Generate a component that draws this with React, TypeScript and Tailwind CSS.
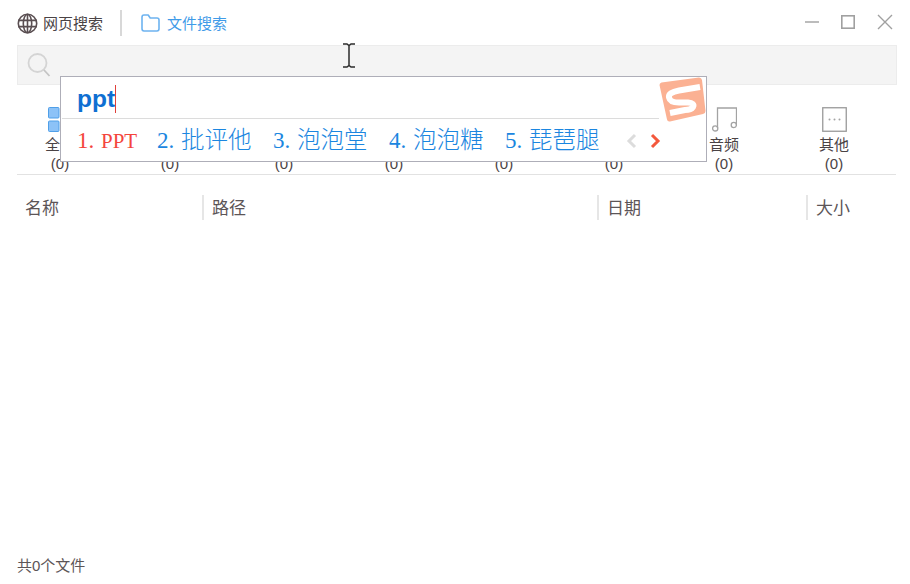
import React from "react";

const CJK = "font-['Liberation_Sans','Noto_Sans_CJK_SC',sans-serif]";

function Globe() {
  return (
    <svg width="21" height="21" viewBox="0 0 21 21" fill="none" stroke="#5a4f52" strokeWidth="1.6">
      <circle cx="10.5" cy="10.5" r="9.2" />
      <ellipse cx="10.5" cy="10.5" rx="4.2" ry="9.2" />
      <path d="M1.3 7.4h18.4M1.3 13.6h18.4M10.5 1.3v18.4" />
    </svg>
  );
}

function Folder() {
  return (
    <svg width="19" height="18" viewBox="0 0 19 18" fill="none" stroke="#6db3f0" strokeWidth="1.6">
      <path d="M1 3.2C1 2 1.8 1 3 1h4.2l2 3H16c1.2 0 2 .8 2 2v8.8c0 1.2-.8 2.2-2 2.2H3c-1.2 0-2-1-2-2.2z" strokeLinejoin="round" />
    </svg>
  );
}

function SearchIcon() {
  return (
    <svg width="24" height="26" viewBox="0 0 24 26" fill="none" stroke="#d4d4d4" strokeWidth="1.8">
      <circle cx="10.5" cy="11" r="9" />
      <path d="M17 18l5.5 6" stroke="#c4c4c4" />
    </svg>
  );
}

function Squares() {
  return (
    <svg width="25" height="25" viewBox="0 0 25 25" fill="#8cc2f7" stroke="#4f9fe8" strokeWidth="1">
      <rect x="0.5" y="0.5" width="10.5" height="10.5" rx="1" />
      <rect x="14" y="0.5" width="10.5" height="10.5" rx="1" />
      <rect x="0.5" y="14" width="10.5" height="10.5" rx="1" />
      <rect x="14" y="14" width="10.5" height="10.5" rx="1" />
    </svg>
  );
}

function Music() {
  return (
    <svg width="25" height="25" viewBox="0 0 25 25" fill="none" stroke="#a3a3a3" strokeWidth="1.3">
      <path d="M5.5 21V1h19v17" />
      <circle cx="3.2" cy="21.4" r="2.6" />
      <circle cx="21.8" cy="18" r="2.6" />
    </svg>
  );
}

function Dots() {
  return (
    <svg width="25" height="25" viewBox="0 0 25 25" fill="none">
      <rect x="0.75" y="0.75" width="23.5" height="23.5" stroke="#9a9a9a" strokeWidth="1.3" />
      <circle cx="7.5" cy="12.5" r="1" fill="#a3a3a3" />
      <circle cx="12.5" cy="12.5" r="1" fill="#a3a3a3" />
      <circle cx="17.5" cy="12.5" r="1" fill="#a3a3a3" />
    </svg>
  );
}

function SogouLogo() {
  return (
    <svg width="48" height="47" viewBox="0 0 48 47">
      <path d="M2.5 5.5 L40 0.5 Q42.5 0.5 43 3 L46.5 34 Q46.5 36.5 44 37 L11 44.5 Q8.5 45 8 42.5 L0.5 8 Q0.5 6 2.5 5.5Z" fill="#fbb193" />
      <path d="M41 10 L20 13.5 Q9 15.5 10 20.5 Q11 25.5 20 25.5 L29 25.5 Q36 26 34 30 Q32 33 26 33 L11 36" fill="none" stroke="#fff" strokeWidth="6" strokeLinejoin="round" />
    </svg>
  );
}

const blank = <div className="h-[25px]" />;

// Only the labels the popup leaves visible carry text.
const cats = [
  { id: 1, label: "全", icon: <Squares />, cls: "", align: "pr-[15px]" },
  { id: 2, label: "", icon: blank, cls: "", align: "" },
  { id: 3, label: "", icon: blank, cls: "ml-[4px]", align: "" },
  { id: 4, label: "", icon: blank, cls: "", align: "" },
  { id: 5, label: "", icon: blank, cls: "", align: "" },
  { id: 6, label: "", icon: blank, cls: "", align: "" },
  { id: 7, label: "音频", icon: <Music />, cls: "", align: "" },
  { id: 8, label: "其他", icon: <Dots />, cls: "", align: "" },
];

const cols = [
  { label: "名称", w: "w-[185px]" },
  { label: "路径", w: "w-[395px]" },
  { label: "日期", w: "w-[209px]" },
  { label: "大小", w: "flex-1" },
];

const cands = [
  { n: "1.", t: "PPT", c: "text-[#f4453c]", w: "w-[80px]", tc: "text-[21px]" },
  { n: "2.", t: "批评他", c: "text-[#1b86e0]", w: "w-[116px]", tc: "text-[23.5px]" },
  { n: "3.", t: "泡泡堂", c: "text-[#1b86e0]", w: "w-[116px]", tc: "text-[23.5px]" },
  { n: "4.", t: "泡泡糖", c: "text-[#1b86e0]", w: "w-[116px]", tc: "text-[23.5px]" },
  { n: "5.", t: "琵琶腿", c: "text-[#1b86e0]", w: "w-[116px]", tc: "text-[23.5px]" },
];

export default function App() {
  return (
    <div className={`relative flex h-[584px] w-[910px] flex-col overflow-hidden bg-white px-[17px] ${CJK}`}>
      {/* Top bar */}
      <div className="flex h-[45px] shrink-0 items-center pt-[1px]">
        <Globe />
        <span className="ml-[5px] pt-[2px] text-[15px] text-[#4a4345]">网页搜索</span>
        <div className="ml-[17px] h-[26px] w-[2px] bg-[#d8d8d8]" />
        <div className="ml-[19px]"><Folder /></div>
        <span className="ml-[7px] pt-[2px] text-[15px] text-[#3f9be8]">文件搜索</span>
        <div className="ml-auto mb-[3px] flex items-center gap-[22px]">
          <svg width="14" height="14" viewBox="0 0 14 14" stroke="#a0a0a0" strokeWidth="1.4"><path d="M0 7h14" /></svg>
          <svg width="14" height="14" viewBox="0 0 14 14" fill="none" stroke="#a0a0a0" strokeWidth="1.6"><rect x="0.8" y="0.8" width="12.4" height="12.4" /></svg>
          <svg width="16" height="16" viewBox="0 0 16 16" stroke="#a0a0a0" strokeWidth="1.4"><path d="M1 1l14 14M15 1L1 15" /></svg>
        </div>
      </div>

      {/* Search box */}
      <div className="flex h-[40px] w-[880px] shrink-0 items-center border border-[#ececec] bg-[#f4f4f4] pl-[9px]">
        <SearchIcon />
      </div>

      {/* Categories */}
      <div className="mt-[22px] ml-[-12px] flex h-[67px] shrink-0">
        {cats.map((c) => (
          <div key={c.id} className={`flex w-[110px] flex-col items-center text-[15px] leading-[20px] text-[#4a4345] ${c.cls}`}>
            {c.icon}
            <span className={`mt-[3px] h-[20px] ${c.align}`}>{c.label}</span>
            <span className="-mt-[1px]">(0)</span>
          </div>
        ))}
      </div>

      <div className="h-[1px] w-[879px] shrink-0 bg-[#e2e2e2]" />

      {/* Table head */}
      <div className="mt-[20px] flex h-[25px] shrink-0 items-center text-[17px] text-[#5c5557]">
        {cols.map((c, i) => (
          <div key={c.label} className={`flex h-[25px] items-center pt-[3px] ${c.w} ${i > 0 ? "border-l-2 border-[#e6e6e6] pl-[8px]" : "pl-[8px]"}`}>
            {c.label}
          </div>
        ))}
      </div>

      {/* Footer */}
      <div className="mt-auto mb-[9px] text-[15px] leading-[18px] text-[#5c5557]">共0个文件</div>

      {/* I-beam mouse cursor over page */}
      <svg className="absolute left-[341px] top-[43px]" width="16" height="25" viewBox="0 0 16 25" fill="none" stroke="#2b2b2b" strokeWidth="1.5">
        <path d="M2 1h4l2 1.5L10 1h4M8 2.5v20M2 24h4l2-1.5L10 24h4" />
      </svg>

      {/* IME popup */}
      <div className="absolute left-[60px] top-[76px] flex h-[86px] w-[647px] flex-col border border-[#aeaeb8] bg-white">
        <div className="ml-[1px] flex h-[42px] w-[597px] shrink-0 items-center border-b border-[#dcdcdc] pl-[15px] pt-[3px]">
          <span className="text-[24.5px] font-bold leading-none text-[#0e6fd2]">ppt</span>
          <span className="h-[28px] w-[1px] bg-[#e0403a]" />
        </div>
        <div className="flex flex-1 items-center pl-[16px] pt-[1px] leading-none font-['Liberation_Serif','Noto_Sans_CJK_SC',serif] font-light">
          {cands.map((c) => (
            <span key={c.n} className={`flex shrink-0 items-baseline whitespace-nowrap ${c.w} ${c.c}`}>
              <span className="w-[24px] shrink-0 text-[23px]">{c.n}</span>
              <span className={c.tc}>{c.t}</span>
            </span>
          ))}
          <svg className="ml-[5px]" width="12" height="16" viewBox="0 0 12 16" fill="none" stroke="#dcdcdc" strokeWidth="3"><path d="M9 2L3 8l6 6" /></svg>
          <svg className="ml-[11px]" width="12" height="16" viewBox="0 0 12 16" fill="none" stroke="#f4583c" strokeWidth="3"><path d="M3 2l6 6-6 6" /></svg>
        </div>
        <div className="absolute right-[-1px] top-0"><SogouLogo /></div>
      </div>
    </div>
  );
}
